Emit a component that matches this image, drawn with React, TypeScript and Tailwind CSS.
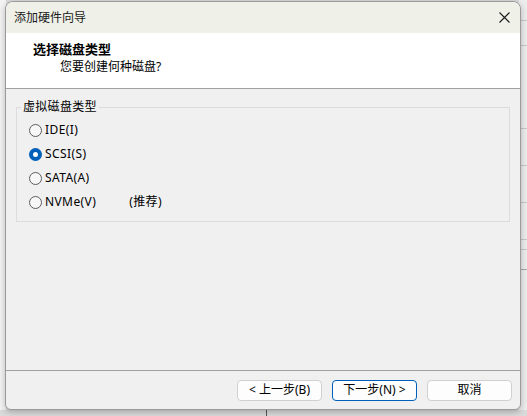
import React, { useState } from 'react';

const font = { fontFamily: '"Noto Sans", "Noto Sans CJK SC", sans-serif' };

function Radio({ checked }: { checked: boolean }) {
  return checked ? (
    <span className="flex h-[13px] w-[13px] items-center justify-center rounded-full bg-[#005fb8]">
      <span className="h-[5px] w-[5px] rounded-full bg-white" />
    </span>
  ) : (
    <span className="h-[13px] w-[13px] rounded-full border border-[#5c5c5c] bg-[#f7f7f7]" />
  );
}

export default function App() {
  const [type, setType] = useState('scsi');
  const options = [
    { id: 'ide', label: 'IDE(I)' },
    { id: 'scsi', label: 'SCSI(S)' },
    { id: 'sata', label: 'SATA(A)' },
    { id: 'nvme', label: 'NVMe(V)', note: '(推荐)' },
  ];

  return (
    <div className="relative h-[416px] w-[527px] overflow-hidden bg-[#dadada] text-[12px] text-black" style={font}>
      {/* background window strips */}
      <div className="absolute left-0 top-0 h-[410px] w-[6px] bg-[#f3f3f3]" />
      <div className="absolute right-0 top-0 flex h-[410px] w-[8px] flex-col bg-[#ececec]">
        <div className="mt-[20px] h-px bg-[#c8c8c8]" />
        <div className="mt-[24px] h-px bg-[#c8c8c8]" />
        <div className="mt-[82px] h-px bg-[#c8c8c8]" />
        <div className="mt-[36px] h-px bg-[#c8c8c8]" />
        <div className="mt-[36px] h-px bg-[#c8c8c8]" />
        <div className="mt-[36px] h-px bg-[#c8c8c8]" />
        <div className="mt-[9px] h-px bg-[#c8c8c8]" />
        <div className="mt-[19px] h-px bg-[#a8a8a8]" />
      </div>
      <div className="absolute left-[266px] top-[408px] h-[8px] w-px bg-[#555]" />

      {/* dialog */}
      <div className="absolute left-[5px] top-[1px] flex h-[409px] w-[516px] flex-col overflow-hidden rounded-t-[8px] rounded-b-[6px] border border-[#9a9a9a] bg-[#f0f0f0] shadow-[0_2px_6px_rgba(0,0,0,0.25)]">
        <div className="flex h-[31px] items-center justify-between bg-[#eff1e9] pl-[8px] pr-[9px]">
          <span className="text-[12px] text-[#1a1a1a]">添加硬件向导</span>
          <svg width="11" height="11" viewBox="0 0 11 11" className="mr-[1px]">
            <path d="M0.5 0.5 L10.5 10.5 M10.5 0.5 L0.5 10.5" stroke="#1a1a1a" strokeWidth="1.1" />
          </svg>
        </div>
        <div className="h-[56px] border-b border-[#a0a0a0] bg-white pl-[27px] pt-[8px]">
          <div className="text-[13px] font-bold leading-[17px]">选择磁盘类型</div>
          <div className="pl-[27px] leading-[17px]">您要创建何种磁盘?</div>
        </div>

        <div className="flex-1 px-[10px] pt-[11px]">
          <fieldset className="h-[122px] border border-[#dcdcdc] pl-[12px] pt-[4px]">
            <legend className="ml-[-8px] px-[2px] leading-[14px] tracking-[0.3px]">虚拟磁盘类型</legend>
            <div className="flex flex-col">
              {options.map((o) => (
                <label key={o.id} className="flex h-[24px] items-center gap-[2px] tracking-[0.4px]" onClick={() => setType(o.id)}>
                  <Radio checked={type === o.id} />
                  <span className="ml-[1px]">{o.label}</span>
                  {o.note && <span className="ml-[31px]">{o.note}</span>}
                </label>
              ))}
            </div>
          </fieldset>
        </div>

        <div className="flex h-[39px] items-center justify-end gap-[10px] border-t border-[#a0a0a0] pr-[8px]">
          <button className="h-[21px] w-[85px] rounded-[4px] border border-[#d0d0d0] bg-[#fdfdfd] text-[12px]">&lt; 上一步(B)</button>
          <button className="h-[21px] w-[85px] rounded-[4px] border border-[#005fb8] bg-[#fdfdfd] text-[12px]">下一步(N) &gt;</button>
          <button className="h-[21px] w-[85px] rounded-[4px] border border-[#d0d0d0] bg-[#fdfdfd] text-[12px]">取消</button>
        </div>
      </div>
    </div>
  );
}
